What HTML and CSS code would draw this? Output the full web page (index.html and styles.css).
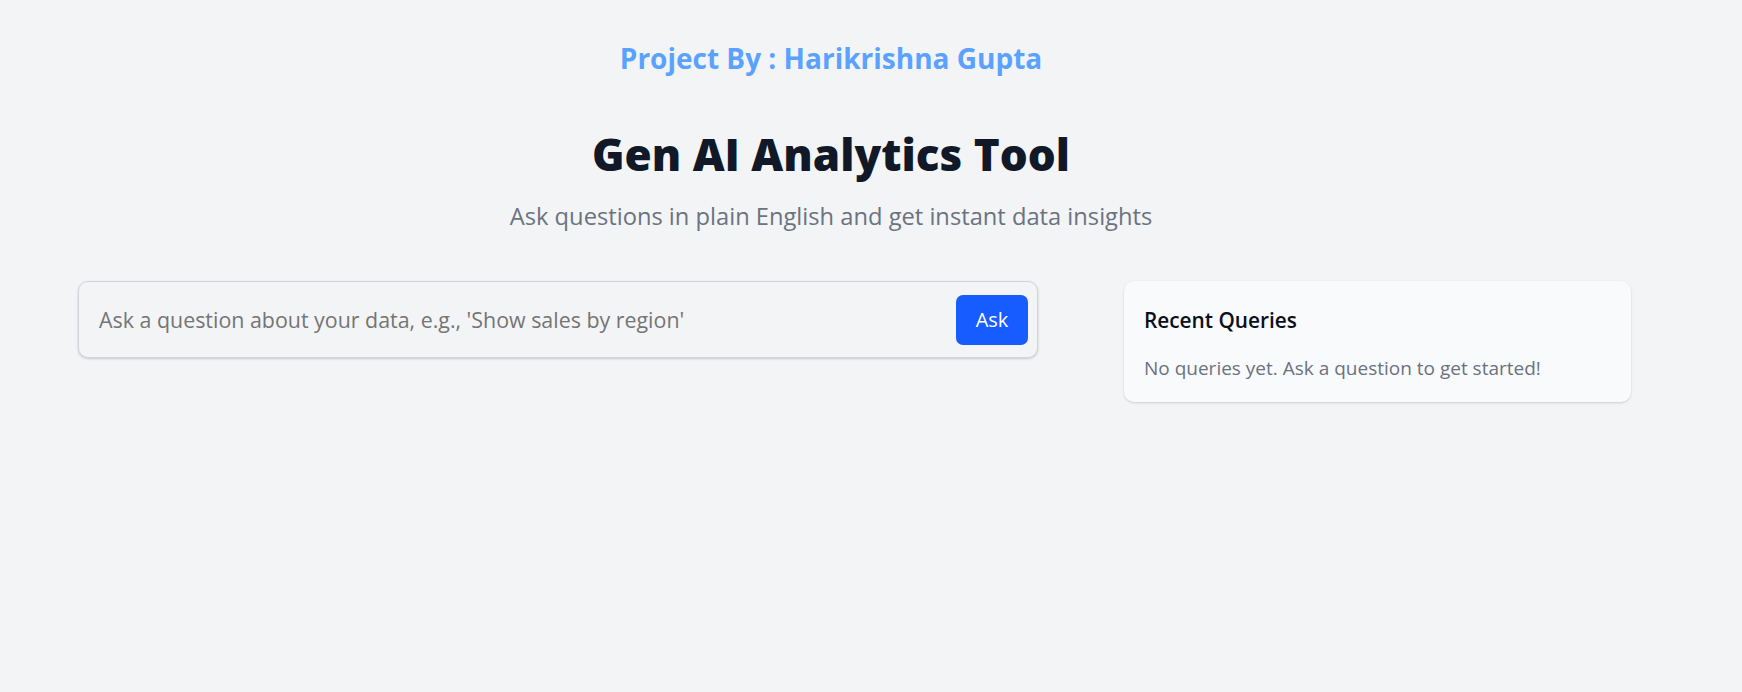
FILE: index.html
```html
<!DOCTYPE html>
<html lang="en">
<head>
<meta charset="utf-8">
<title>Gen AI Analytics Tool</title>
<link rel="stylesheet" href="styles.css">
</head>
<body>
<div class="page">
  <header class="hero">
    <p class="byline">Project By : Harikrishna Gupta</p>
    <h1 class="title">Gen AI Analytics Tool</h1>
    <p class="subtitle">Ask questions in plain English and get instant data insights</p>
  </header>
  <main class="workspace">
    <form class="ask-box">
      <input class="ask-input" type="text" placeholder="Ask a question about your data, e.g., 'Show sales by region'">
      <button class="ask-btn" type="button">Ask</button>
    </form>
    <aside class="recent">
      <h2 class="recent-title">Recent Queries</h2>
      <p class="recent-empty">No queries yet. Ask a question to get started!</p>
    </aside>
  </main>
</div>
</body>
</html>
```

FILE: styles.css
```css
* { box-sizing: border-box; }
html, body {
  margin: 0;
  padding: 0;
  background: #f3f4f6;
  font-family: "Open Sans", "Noto Sans", sans-serif;
}
.page {
  width: 1662px;
  min-height: 692px;
}
.hero {
  text-align: center;
  padding-top: 38px;
}
.byline {
  margin: 0;
  font-size: 28px;
  line-height: 40px;
  font-weight: 700;
  color: #5ba2ff;
}
.title {
  margin: 48px 0 0;
  font-size: 44px;
  line-height: 56px;
  font-weight: 800;
  color: #111827;
}
.subtitle {
  margin: 20px 0 0;
  font-size: 23.7px;
  line-height: 28px;
  color: #6b7280;
}
.workspace {
  display: flex;
  align-items: flex-start;
  gap: 86px;
  margin: 51px 0 0 78px;
}
.ask-box {
  width: 960px;
  height: 77px;
  margin: 0;
  display: flex;
  align-items: center;
  gap: 16px;
  padding: 0 9px 0 20px;
  border: 1px solid #d1d5db;
  border-radius: 10px;
  background: #f3f4f6;
  box-shadow: 0 1px 3px rgba(0,0,0,0.12), 0 1px 2px rgba(0,0,0,0.06);
}
.ask-input {
  flex: 1;
  border: 0;
  outline: 0;
  background: transparent;
  font-family: inherit;
  font-size: 21.4px;
  color: #111827;
  padding: 0;
}
.ask-input::placeholder { color: #757575; }
.ask-btn {
  width: 72px;
  height: 50px;
  border: 0;
  border-radius: 7px;
  background: #175cff;
  color: #ffffff;
  font-family: inherit;
  font-size: 20px;
  padding: 0;
}
.recent {
  width: 507px;
  padding: 24px 20px 21px;
  border-radius: 10px;
  background: #f9fafb;
  box-shadow: 0 1px 3px rgba(0,0,0,0.1), 0 1px 2px rgba(0,0,0,0.06);
}
.recent-title {
  margin: 0;
  font-size: 20.8px;
  line-height: 30px;
  font-weight: 600;
  color: #0b0f19;
}
.recent-empty {
  margin: 20px 0 0;
  font-size: 19px;
  line-height: 26px;
  color: #6b7280;
}
```
